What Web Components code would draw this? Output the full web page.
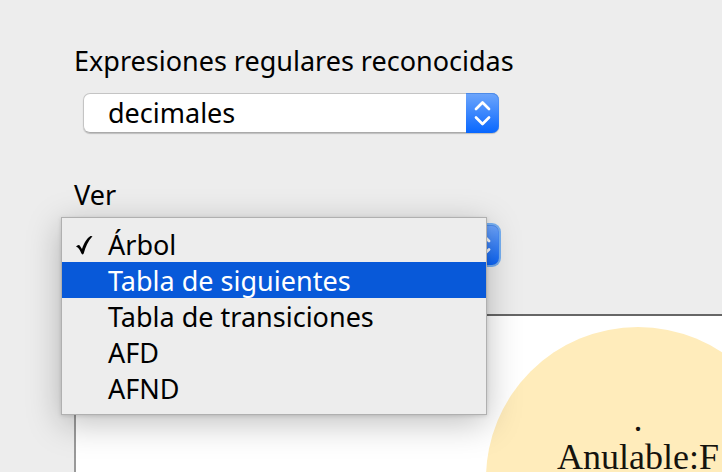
<!DOCTYPE html>
<html lang="es">
<head>
<meta charset="utf-8">
<title>Expresiones regulares</title>
<style>
html, body { height: 100%; }
body { margin: 0; background: #ededed; color: #000; overflow: hidden; font: 27px/36px "Noto Sans", "Open Sans", sans-serif; }
</style>
</head>
<body>
<regex-viewer></regex-viewer>
<script>
const define = (name, html, init) => {
  const template = document.createElement('template');
  template.innerHTML = html;
  customElements.define(name, class extends HTMLElement {
    constructor() {
      super();
      this.attachShadow({ mode: 'open' }).append(template.content.cloneNode(true));
    }
    connectedCallback() { if (init) init(this, this.shadowRoot); }
  });
};

define('pop-up-select', `
<style>
:host { display: block; }
label { display: block; }
.box { display: grid; grid-template-columns: 1fr 33px; height: 40px; margin: 14px 0 0 9px; width: 416px; max-width: 100%; border-radius: 7px; box-shadow: 0 1px 1px #0003; }
select { grid-area: 1 / 1 / 2 / 3; appearance: none; box-sizing: border-box; width: 100%; margin: 0; padding: 0 40px 0 24px; border: 1px solid #c4c4c4; border-bottom-color: #aaa; border-radius: 7px; background: #fff; color: inherit; font: inherit; line-height: 36px; outline: none; }
svg { grid-area: 1 / 2; width: 33px; height: 40px; border-radius: 0 7px 7px 0; background: linear-gradient(#6ea6fb, #0867ff); box-shadow: inset 0 1px #4d8be8, inset -1px 0 #3c82ed55; pointer-events: none; z-index: 0; }
:host([active]) .box { margin-top: 12px; box-shadow: 0 0 0 2px #76b0f3; }
:host([active]) svg { background: linear-gradient(#6ea4fa, #0c66fa); }
</style>
<label for="s"></label>
<div class="box"><select id="s"></select>
<svg viewBox="0 0 33 40" fill="none" stroke="#fff" stroke-width="2.7" stroke-linecap="round" stroke-linejoin="round" aria-hidden="true"><path d="M10 16L16.5 9.5L23 16M10 24.5L16.5 31L23 24.5"/></svg></div>`,
(host, root) => {
  root.querySelector('label').textContent = host.getAttribute('label');
  root.querySelector('select').add(new Option(host.getAttribute('value')));
});

define('menu-item', `
<style>
:host { display: block; }
button { display: grid; grid-template-columns: 46px 1fr; align-items: center; width: 100%; height: 36px; padding: 1px 0 0; border: 0; background: none; color: inherit; font: inherit; text-align: left; }
svg { width: 20px; height: 24px; margin-left: 12px; visibility: hidden; }
:host([checked]) svg { visibility: visible; }
:host([highlighted]) button { background: #0859d9; color: #fff; }
</style>
<button role="menuitemradio"><svg viewBox="0 0 20 24" aria-hidden="true"><path d="M2 13.5Q4 11.2 5.5 12.2L8 16C10 10 13 5 16.5 3L18.5 3.3C14 8 11.5 14 9.7 20.5Q8.3 22.5 7.3 20.3C6 17 4.5 14.4 2 13.5Z"/></svg><span><slot></slot></span></button>`,
(host, root) => root.querySelector('button').setAttribute('aria-checked', host.hasAttribute('checked')));

define('pop-up-menu', `
<style>
:host { display: block; box-sizing: border-box; padding: 8px 0; background: #ededed; border: 1px solid #b0b0b0; box-shadow: 0 8px 32px #00000040, 0 1px 4px #0002; }
</style>
<div role="menu"><slot></slot></div>`);

define('tree-node', `
<style>
:host { display: flex; flex-direction: column; align-items: center; box-sizing: border-box; width: 304px; height: 304px; padding-top: 74px; border-radius: 50%; background: #ffecbb; color: #15130e; font: 36px/40px "Liberation Serif", "Times New Roman", serif; }
::slotted([slot="symbol"]) { line-height: 36px; }
</style>
<slot name="symbol"></slot><slot></slot>`);

define('tree-canvas', `
<style>
:host { display: block; position: relative; overflow: hidden; background: #fff; border: solid #666; border-width: 2px 0 0 2px; border-left-color: #999; }
::slotted(tree-node) { position: absolute; left: 410px; top: 11px; }
</style>
<slot></slot>`);

define('regex-viewer', `
<style>
:host { display: flex; flex-direction: column; box-sizing: border-box; height: 100%; padding: 43px 0 0 74px; }
.view { position: relative; margin-top: 44px; }
pop-up-menu { position: absolute; z-index: 1; left: -13px; top: 40px; width: 426px; }
tree-canvas { flex: 1; margin-top: 49px; }
</style>
<pop-up-select label="Expresiones regulares reconocidas" value="decimales"></pop-up-select>
<div class="view">
<pop-up-select label="Ver" value="Árbol" active></pop-up-select>
<pop-up-menu>
<menu-item checked>Árbol</menu-item>
<menu-item highlighted>Tabla de siguientes</menu-item>
<menu-item>Tabla de transiciones</menu-item>
<menu-item>AFD</menu-item>
<menu-item>AFND</menu-item>
</pop-up-menu>
</div>
<tree-canvas><tree-node><span slot="symbol">.</span><span>Anulable:F</span></tree-node></tree-canvas>`);
</script>
</body>
</html>
